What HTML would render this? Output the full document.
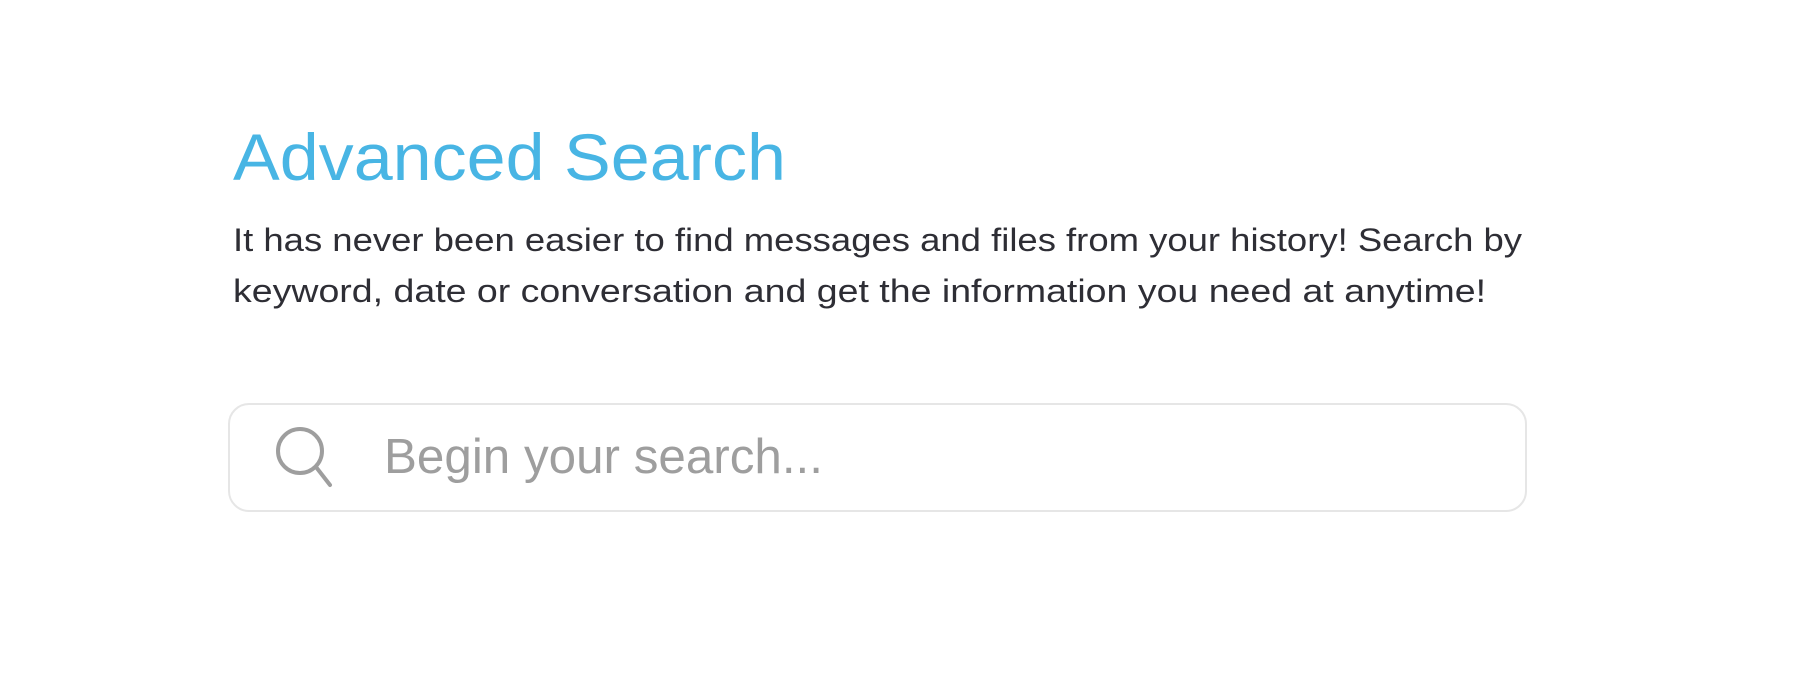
<!DOCTYPE html>
<html><head><meta charset="utf-8"><style>
html,body{margin:0;padding:0;background:#fff;width:1801px;height:675px;overflow:hidden}
svg{display:block}
</style></head><body>
<svg width="1801" height="675" viewBox="0 0 1801 675" xmlns="http://www.w3.org/2000/svg">
<text x="233" y="180" font-family="Liberation Sans, sans-serif" font-size="66" fill="#48b5e4" textLength="553" lengthAdjust="spacingAndGlyphs">Advanced Search</text>
<text x="233" y="251" font-family="Liberation Sans, sans-serif" font-size="32" fill="#2e2e35" textLength="1289" lengthAdjust="spacingAndGlyphs">It has never been easier to find messages and files from your history! Search by</text>
<text x="233" y="302" font-family="Liberation Sans, sans-serif" font-size="32" fill="#2e2e35" textLength="1253" lengthAdjust="spacingAndGlyphs">keyword, date or conversation and get the information you need at anytime!</text>
<rect x="229" y="404" width="1297" height="107" rx="20" ry="20" fill="#fff" stroke="#e6e6e6" stroke-width="2"/>
<circle cx="300" cy="451" r="22" fill="none" stroke="#9e9e9e" stroke-width="4"/>
<line x1="316" y1="467" x2="330" y2="485" stroke="#9e9e9e" stroke-width="4" stroke-linecap="round"/>
<text x="384" y="473" font-family="Liberation Sans, sans-serif" font-size="49" fill="#9e9e9e" textLength="439" lengthAdjust="spacingAndGlyphs">Begin your search...</text>
</svg>
</body></html>
